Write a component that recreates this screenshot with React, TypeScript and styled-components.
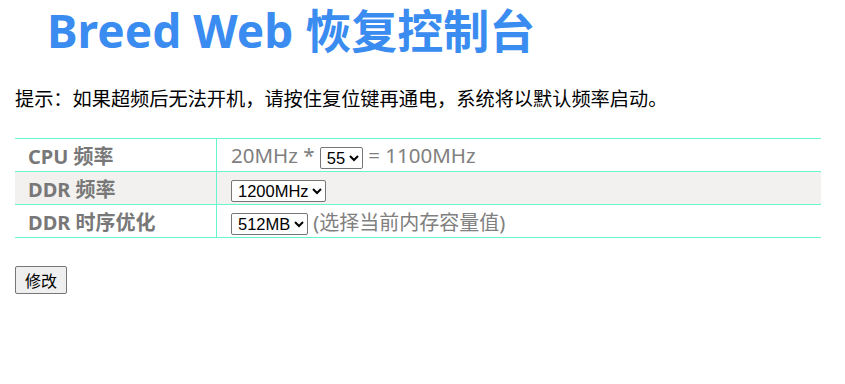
import React, { useState } from 'react';
import styled, { createGlobalStyle } from 'styled-components';

const GlobalStyle = createGlobalStyle`
  body {
    margin: 0;
    background: #fff;
    font-family: "Noto Sans", "Noto Sans CJK SC", sans-serif;
  }
`;

const Page = styled.div`
  padding: 0 24px 0 15px;
`;

const Title = styled.h1`
  margin: 0 0 0 32px;
  font-size: 46px;
  line-height: 60px;
  font-weight: 700;
  color: #3a8cf0;
`;

const Hint = styled.p`
  margin: 25px 0 0;
  font-size: 19.2px;
  line-height: 28px;
  color: #000;
`;

const Table = styled.table`
  width: 100%;
  margin-top: 25px;
  border-collapse: collapse;
  border-top: 1px solid #66f5cc;
`;

const Row = styled.tr<{ $alt?: boolean }>`
  height: 33px;
  background: ${(p) => (p.$alt ? '#f2f1ef' : '#fff')};
  border-bottom: 1px solid #66f5cc;
`;

const Label = styled.td`
  width: 188px;
  padding: 0 0 0 13px;
  border-right: 1px solid #66f5cc;
  font-size: 20px;
  font-weight: 700;
  color: #787878;
`;

const Value = styled.td`
  padding: 0 0 0 14px;
  font-size: 20.5px;
  color: #808080;
`;

const Note = styled.span`
  font-size: 20px;
`;

const Select = styled.select`
  font-family: "Liberation Sans", Arial, sans-serif;
  font-size: 16.5px;
  color: #000;
  height: 22px;
  padding: 0 0 0 2px;
  border: 1px solid #767676;
  border-radius: 2px;
  background: #fff;
  vertical-align: middle;
`;

const Submit = styled.button`
  margin-top: 28px;
  font-family: "Noto Sans CJK SC", sans-serif;
  font-size: 16px;
  height: 28px;
  padding: 0 9px;
  border: 1px solid #767676;
  border-radius: 2px;
  background: #efefef;
  color: #000;
`;

export default function App() {
  const [mult, setMult] = useState('55');
  const [ddr, setDdr] = useState('1200MHz');
  const [mem, setMem] = useState('512MB');

  return (
    <Page>
      <GlobalStyle />
      <Title>Breed Web 恢复控制台</Title>
      <Hint>提示：如果超频后无法开机，请按住复位键再通电，系统将以默认频率启动。</Hint>
      <Table>
        <tbody>
          <Row>
            <Label>CPU 频率</Label>
            <Value>
              20MHz *{' '}
              <Select value={mult} onChange={(e) => setMult(e.target.value)}>
                {['50', '52', '55', '58', '60'].map((m) => (
                  <option key={m}>{m}</option>
                ))}
              </Select>{' '}
              = {Number(mult) * 20}MHz
            </Value>
          </Row>
          <Row $alt>
            <Label>DDR 频率</Label>
            <Value>
              <Select value={ddr} onChange={(e) => setDdr(e.target.value)}>
                {['800MHz', '1066MHz', '1200MHz'].map((d) => (
                  <option key={d}>{d}</option>
                ))}
              </Select>
            </Value>
          </Row>
          <Row>
            <Label>DDR 时序优化</Label>
            <Value>
              <Select value={mem} onChange={(e) => setMem(e.target.value)}>
                {['64MB', '128MB', '256MB', '512MB'].map((m) => (
                  <option key={m}>{m}</option>
                ))}
              </Select>{' '}
              <Note>(选择当前内存容量值)</Note>
            </Value>
          </Row>
        </tbody>
      </Table>
      <Submit>修改</Submit>
    </Page>
  );
}
